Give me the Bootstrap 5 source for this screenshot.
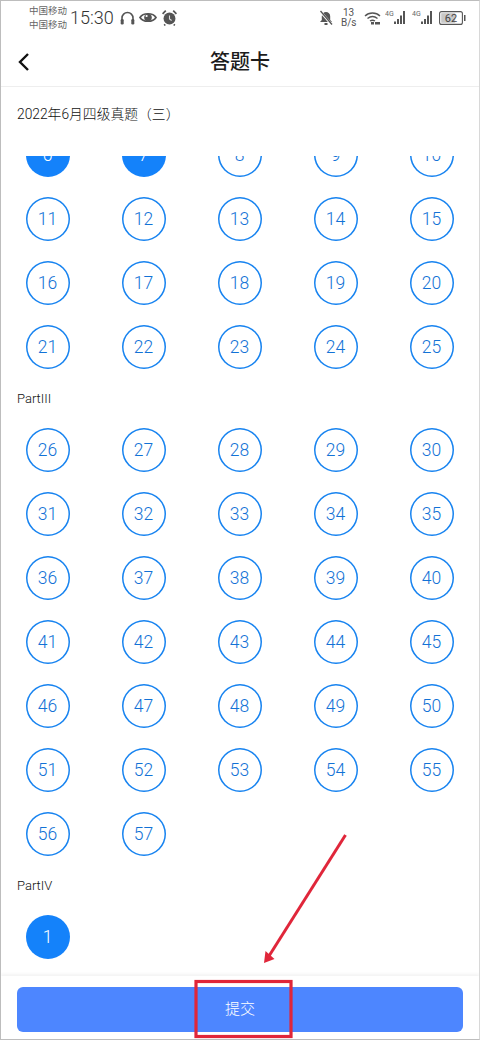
<!DOCTYPE html>
<html lang="zh"><head><meta charset="utf-8">
<link href="https://cdn.jsdelivr.net/npm/bootstrap@5.3.0/dist/css/bootstrap.min.css" rel="stylesheet">
<style>
html,body{margin:0;height:1040px;overflow:hidden;background:#fff}
body{font-family:Roboto,"Noto Sans CJK SC",sans-serif}
.screen{width:480px;height:1040px;position:relative;border-top:1px solid #bdbdbd;border-left:1px solid #bdbdbd;border-bottom:1px solid #bdbdbd;border-right:1px solid #d8d8d8;overflow:hidden}
.sbar{height:36px;padding-left:28px;padding-right:12px;padding-bottom:3px;color:#555}
.carrier{font-size:9.5px;line-height:14px;width:41px;color:#666}
.clock{font-size:18px;font-weight:300;line-height:1;color:#333;width:46px}
.speed{font-size:10px;line-height:9.500px;text-align:center;width:15px;color:#555}
.pagehead{height:50px;border-bottom:1px solid #eee}
.pagehead h1{font-size:20px;font-weight:500;margin:0;color:#1c1c1c;line-height:1}
.backzone{position:absolute;left:16px}
.subhead{height:69px;padding-left:16px;padding-top:17px;font-size:13.800px;font-weight:300;color:#111;line-height:20px}
.clipper{height:820px;overflow:hidden;flex:none}
.clipinner{margin-top:-33px}
.numgrid{display:grid;grid-template-columns:repeat(5,96px);grid-auto-rows:64px;margin-left:-1.500px}
.cellbox{display:flex;align-items:center;justify-content:center}
.qnum{width:44px;height:44px;box-shadow:inset 0 0 0 1.500px #1783f0;border-radius:50%;color:#1272d6;font-size:17.500px;font-weight:300;display:flex;align-items:center;justify-content:center;background:#fff}
.qnum.done{background:#1482fa;box-shadow:none;color:#fff}
.partname{height:39px;padding-left:16px;font-size:13px;font-weight:300;color:#111;display:flex;align-items:center}
.footbar{height:63px;padding:11px 15px 0 16px;box-shadow:0 -2px 3px rgba(0,0,0,.05);background:#fff;position:relative;flex:none}
.submitbtn{width:446px;height:45px;background:#4d86ff;border:0;border-radius:6px;color:#fff;font-size:15px;font-weight:300}
.notes{position:absolute;left:-1px;top:-1px;pointer-events:none}
</style></head><body>
<div class="screen d-flex flex-column">
 <div class="sbar d-flex align-items-center">
  <div class="carrier">中国移动<br>中国移动</div>
  <div class="clock">15:30</div>
  <svg class="ms-1" width="15" height="14" viewBox="0 0 15 14"><path d="M2 12V7a5.500 5.500 0 0 1 11 0v5" fill="none" stroke="#555" stroke-width="1.600"/><rect x=".7" y="8" width="3" height="5.500" rx="1.200" fill="#555"/><rect x="11.300" y="8" width="3" height="5.500" rx="1.200" fill="#555"/></svg>
  <svg class="ms-1" width="18" height="13" viewBox="0 0 18 13"><path d="M1 6.500C4 1.500 14 1.500 17 6.500C14 11.500 4 11.500 1 6.500Z" fill="none" stroke="#555" stroke-width="1.700"/><circle cx="9" cy="6.500" r="3.800" fill="#555"/><circle cx="7.600" cy="5" r="1.100" fill="#fff"/></svg>
  <svg class="ms-1" width="17" height="17" viewBox="0 0 16 16"><circle cx="8" cy="9" r="5.600" fill="#555"/><path d="M1.500 4.500L4.500 1.500M14.500 4.500L11.500 1.500M4 14.500L3 15.500M12 14.500L13 15.500" stroke="#555" stroke-width="1.600"/><path d="M8 6v3.400l2 1.400" fill="none" stroke="#ddd" stroke-width="1"/></svg>
  <div class="flex-grow-1"></div>
  <svg width="14" height="16" viewBox="0 0 14 16"><path d="M7 2a4.200 4.200 0 0 1 4.200 4.200V10l1.800 2H1l1.800-2V6.200A4.200 4.200 0 0 1 7 2Z" fill="#555"/><path d="M1 1L13 15" stroke="#fff" stroke-width="2.600"/><path d="M1.500 1L13 14.500" stroke="#555" stroke-width="1.300"/><rect x="5.500" y="13" width="3" height="2" fill="#555"/></svg>
  <div class="speed ms-2">13<br>B/s</div>
  <svg class="ms-2" width="17" height="14" viewBox="0 0 17 14"><path d="M1 5C5 1 12 1 16 5M3.500 7.500C6.500 5 10.500 5 13.500 7.500M6 10C7.500 9 9.500 9 11 10" fill="none" stroke="#555" stroke-width="1.400"/><rect x="7" y="11" width="3" height="2.500" fill="#555"/><rect x="11" y="11" width="5" height="2.500" fill="#555"/></svg>
  <svg class="ms-1" width="23" height="15" viewBox="0 0 23 15"><text x="0" y="6" font-size="7" font-family="Roboto" fill="#666">4G</text><rect x="9" y="11.500" width="2" height="2.500" fill="#555"/><rect x="12" y="9" width="2" height="5" fill="#555"/><rect x="15" y="5.500" width="2" height="8.500" fill="#555"/><rect x="18" y="1" width="2" height="13" fill="#555"/></svg>
  <svg class="ms-1" width="23" height="15" viewBox="0 0 23 15"><text x="0" y="6" font-size="7" font-family="Roboto" fill="#666">4G</text><rect x="9" y="11.500" width="2" height="2.500" fill="#555"/><rect x="12" y="9" width="2" height="5" fill="#555"/><rect x="15" y="5.500" width="2" height="8.500" fill="#555"/><rect x="18" y="1" width="2" height="13" fill="#555"/></svg>
  <svg class="ms-1" width="28" height="14" viewBox="0 0 28 14"><rect x=".6" y=".6" width="22.800" height="12.800" rx="2" fill="none" stroke="#555" stroke-width="1.100"/><rect x="2.200" y="2.200" width="14" height="9.600" fill="#c8c8c8"/><text x="12" y="11" font-size="11" text-anchor="middle" font-family="Roboto" fill="#444">62</text><rect x="25" y="4" width="1.500" height="6" fill="#555"/></svg>
 </div>
 <div class="pagehead d-flex align-items-center justify-content-center position-relative">
  <svg class="backzone" width="14" height="20" viewBox="0 0 14 20"><path d="M11 2L3 10L11 18" fill="none" stroke="#111" stroke-width="2.400"/></svg>
  <h1>答题卡</h1>
 </div>
 <div class="subhead">2022年6月四级真题（三）</div>
 <div class="clipper">
  <div class="clipinner">
   <div class="numgrid">
    <div class="cellbox"><div class="qnum done">6</div></div><div class="cellbox"><div class="qnum done">7</div></div><div class="cellbox"><div class="qnum">8</div></div><div class="cellbox"><div class="qnum">9</div></div><div class="cellbox"><div class="qnum">10</div></div>
    <div class="cellbox"><div class="qnum">11</div></div><div class="cellbox"><div class="qnum">12</div></div><div class="cellbox"><div class="qnum">13</div></div><div class="cellbox"><div class="qnum">14</div></div><div class="cellbox"><div class="qnum">15</div></div>
    <div class="cellbox"><div class="qnum">16</div></div><div class="cellbox"><div class="qnum">17</div></div><div class="cellbox"><div class="qnum">18</div></div><div class="cellbox"><div class="qnum">19</div></div><div class="cellbox"><div class="qnum">20</div></div>
    <div class="cellbox"><div class="qnum">21</div></div><div class="cellbox"><div class="qnum">22</div></div><div class="cellbox"><div class="qnum">23</div></div><div class="cellbox"><div class="qnum">24</div></div><div class="cellbox"><div class="qnum">25</div></div>
   </div>
   <div class="partname">PartIII</div>
   <div class="numgrid">
    <div class="cellbox"><div class="qnum">26</div></div><div class="cellbox"><div class="qnum">27</div></div><div class="cellbox"><div class="qnum">28</div></div><div class="cellbox"><div class="qnum">29</div></div><div class="cellbox"><div class="qnum">30</div></div>
    <div class="cellbox"><div class="qnum">31</div></div><div class="cellbox"><div class="qnum">32</div></div><div class="cellbox"><div class="qnum">33</div></div><div class="cellbox"><div class="qnum">34</div></div><div class="cellbox"><div class="qnum">35</div></div>
    <div class="cellbox"><div class="qnum">36</div></div><div class="cellbox"><div class="qnum">37</div></div><div class="cellbox"><div class="qnum">38</div></div><div class="cellbox"><div class="qnum">39</div></div><div class="cellbox"><div class="qnum">40</div></div>
    <div class="cellbox"><div class="qnum">41</div></div><div class="cellbox"><div class="qnum">42</div></div><div class="cellbox"><div class="qnum">43</div></div><div class="cellbox"><div class="qnum">44</div></div><div class="cellbox"><div class="qnum">45</div></div>
    <div class="cellbox"><div class="qnum">46</div></div><div class="cellbox"><div class="qnum">47</div></div><div class="cellbox"><div class="qnum">48</div></div><div class="cellbox"><div class="qnum">49</div></div><div class="cellbox"><div class="qnum">50</div></div>
    <div class="cellbox"><div class="qnum">51</div></div><div class="cellbox"><div class="qnum">52</div></div><div class="cellbox"><div class="qnum">53</div></div><div class="cellbox"><div class="qnum">54</div></div><div class="cellbox"><div class="qnum">55</div></div>
    <div class="cellbox"><div class="qnum">56</div></div><div class="cellbox"><div class="qnum">57</div></div>
   </div>
   <div class="partname">PartIV</div>
   <div class="numgrid">
    <div class="cellbox"><div class="qnum done">1</div></div>
   </div>
  </div>
 </div>
 <div class="footbar"><button class="btn submitbtn" type="button">提交</button></div>
 <svg class="notes" width="480" height="1040" viewBox="0 0 480 1040"><rect x="196" y="981.500" width="95" height="55" fill="none" stroke="#e0263a" stroke-width="3.200"/><path d="M345.500 835L269 956" stroke="#e0263a" stroke-width="3" fill="none"/><path d="M264 963L265.500 951L274.500 959Z" fill="#e0263a"/></svg>
</div>
<script src="https://cdn.jsdelivr.net/npm/bootstrap@5.3.0/dist/js/bootstrap.bundle.min.js"></script>
</body></html>
